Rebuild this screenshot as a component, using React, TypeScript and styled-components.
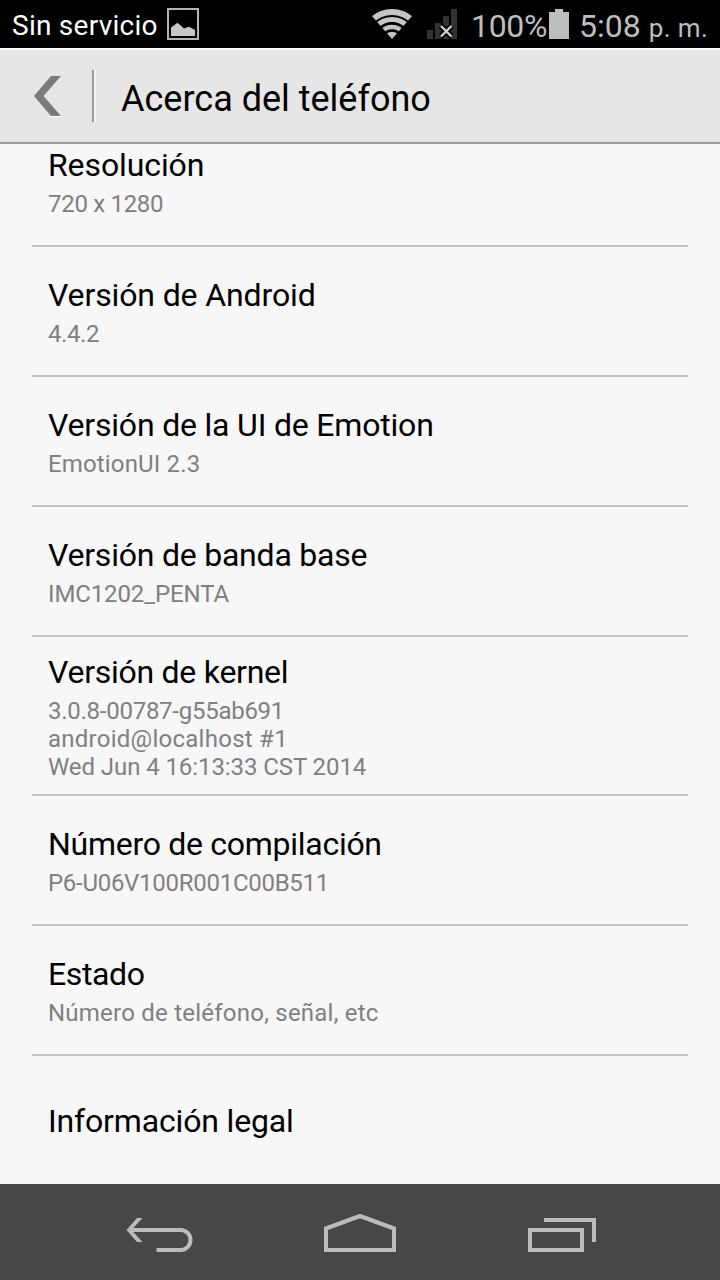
import React from "react";
import styled, { createGlobalStyle } from "styled-components";

const GlobalStyle = createGlobalStyle`
  *, *::before, *::after { box-sizing: border-box; }
  body { margin: 0; background: #f7f7f7; font-family: Roboto, "Noto Sans", sans-serif; }
`;

const Screen = styled.div`
  display: flex;
  flex-direction: column;
  width: 720px;
  height: 1280px;
  overflow: hidden;
  background: #f7f7f7;
`;

const StatusBar = styled.header`
  display: flex;
  align-items: flex-start;
  flex: none;
  height: 48px;
  background: #000;
  padding-left: 12px;
`;

const StatusText = styled.span<{ $size: number; $top: number; $left?: number; $spacing?: number; $color?: string }>`
  flex: none;
  margin-top: ${(p) => p.$top}px;
  margin-left: ${(p) => p.$left ?? 0}px;
  font-size: ${(p) => p.$size}px;
  line-height: 36px;
  letter-spacing: ${(p) => p.$spacing ?? 0}px;
  white-space: pre;
  color: ${(p) => p.$color ?? "#bebebe"};
`;

const Carrier = styled.div`
  display: flex;
  flex: none;
  width: 155px;
`;

const StatusIcon = styled.svg`
  flex: none;
  height: 48px;
`;

const Level = styled.div`
  display: flex;
  flex: none;
  width: 78px;
  margin-left: 11px;
`;

const Spacer = styled.div`
  flex: 1;
`;

const Clock = styled.div`
  display: flex;
  flex: none;
  width: 141px;
  margin-left: 10px;
`;

const TitleBar = styled.div`
  display: flex;
  align-items: center;
  flex: none;
  height: 96px;
  border-top: 2px solid #fff;
  border-bottom: 2px solid #9b9b9b;
  background: #e6e6e6;
`;

const BackIcon = styled.svg`
  flex: none;
  margin-left: 32px;
`;

const Divider = styled.div`
  flex: none;
  width: 4px;
  height: 52px;
  margin-left: 28px;
  border-left: 2px solid #9d9d9d;
  border-right: 2px solid #f4f4f4;
`;

const Heading = styled.h1`
  margin: 5px 0 0 25px;
  font-size: 36px;
  line-height: 42px;
  font-weight: 400;
  color: #000;
`;

const List = styled.main`
  flex: 1;
  min-height: 0;
  padding: 0 32px;
  overflow: hidden;
`;

const Row = styled.section<{ $height: number; $pad: number; $last?: boolean; $scrolled?: boolean }>`
  height: ${(p) => p.$height}px;
  margin-top: ${(p) => (p.$scrolled ? -27 : 0)}px;
  padding: ${(p) => p.$pad}px 16px 0;
  border-bottom: ${(p) => (p.$last ? "none" : "2px solid #c3c3c3")};
`;

const RowTitle = styled.h2<{ $spacing: number }>`
  margin: 0 0 6px;
  font-size: 32px;
  line-height: 38px;
  font-weight: 400;
  letter-spacing: ${(p) => p.$spacing}px;
  white-space: nowrap;
  color: #000;
`;

const RowLine = styled.p<{ $spacing: number }>`
  margin: 0;
  font-size: 24px;
  line-height: 28px;
  letter-spacing: ${(p) => p.$spacing}px;
  white-space: nowrap;
  color: #808080;
`;

const NavBar = styled.nav`
  display: flex;
  align-items: center;
  justify-content: space-around;
  flex: none;
  height: 96px;
  padding: 0 60px;
  background: #474747;
`;

type Item = { title: string; spacing: number; lines: [string, number][]; height?: number; pad?: number };

const items: Item[] = [
  { title: "Resolución", spacing: -0.1, lines: [["720 x 1280", -0.3]] },
  { title: "Versión de Android", spacing: -0.12, lines: [["4.4.2", -0.4]] },
  { title: "Versión de la UI de Emotion", spacing: -0.19, lines: [["EmotionUI 2.3", 0.15]] },
  { title: "Versión de banda base", spacing: -0.22, lines: [["IMC1202_PENTA", -0.12]] },
  {
    title: "Versión de kernel",
    spacing: -0.26,
    lines: [["3.0.8-00787-g55ab691", -0.26], ["android@localhost #1", 0.26], ["Wed Jun 4 16:13:33 CST 2014", -0.08]],
    height: 159,
    pad: 16,
  },
  { title: "Número de compilación", spacing: -0.28, lines: [["P6-U06V100R001C00B511", -0.28]] },
  { title: "Estado", spacing: -0.4, lines: [["Número de teléfono, señal, etc", 0.23]] },
  { title: "Información legal", spacing: -0.16, lines: [], pad: 46 },
];

export default function App() {
  return (
    <Screen>
      <GlobalStyle />
      <StatusBar>
        <Carrier>
          <StatusText $size={28} $top={8} $spacing={0.25} $color="#fff">Sin servicio</StatusText>
        </Carrier>
        <StatusIcon width="33" viewBox="167 0 33 48">
          <rect x="168" y="9" width="30" height="30" fill="none" stroke="#b4b4b4" strokeWidth="2" />
          <path d="M171 36V27.500L177.500 22.700L184 28.500L189 26.700L195 30V36Z" fill="#c8c8c8" />
        </StatusIcon>
        <Spacer />
        <StatusIcon width="90" viewBox="370 0 90 48">
          <defs>
            <clipPath id="wifi-wedge">
              <path d="M392 39L371 14.900V0H413V14.900Z" />
            </clipPath>
          </defs>
          <g clipPath="url(#wifi-wedge)" fill="none" stroke="#c4c4c4">
            <circle cx="392" cy="41" r="29" strokeWidth="6" />
            <circle cx="392" cy="41" r="21.600" strokeWidth="5" />
            <circle cx="392" cy="41" r="14" strokeWidth="4.600" />
            <circle cx="392" cy="41" r="9.300" fill="#c4c4c4" stroke="none" />
          </g>
          <path d="M427 30h6v9h-6zM435 23h6v16h-6zM443 16h6v23h-6zM451 9h6v30h-6z" fill="#333" />
          <path d="M441 26L451.500 36.500M451.500 26L441 36.500" stroke="#000" strokeWidth="6" />
          <path d="M441 26L451.500 36.500M451.500 26L441 36.500" stroke="#d0d0d0" strokeWidth="2.400" />
        </StatusIcon>
        <Level>
          <StatusText $size={32} $top={8} $spacing={-0.3}>100%</StatusText>
        </Level>
        <StatusIcon width="20" viewBox="549 0 20 48">
          <path d="M549 12h6V9h8v3h6v27h-20z" fill="#bebebe" />
        </StatusIcon>
        <Clock>
          <StatusText $size={32} $top={8}>5:08</StatusText>
          <StatusText $size={26} $top={10} $left={8} $spacing={0.4}>p. m.</StatusText>
        </Clock>
      </StatusBar>
      <TitleBar>
        <BackIcon width="32" height="46" viewBox="32 73 32 46">
          <path d="M51 116.500H61" fill="none" stroke="#fff" strokeWidth="1" />
          <path d="M51 76H61L43.500 96L61 116H51L34 96Z" fill="#7b7b7b" />
        </BackIcon>
        <Divider />
        <Heading>Acerca del teléfono</Heading>
      </TitleBar>
      <List>
        {items.map((item, i) => (
          <Row
            key={item.title}
            $height={item.height ?? 130}
            $pad={item.pad ?? 29}
            $scrolled={i === 0}
            $last={i === items.length - 1}
          >
            <RowTitle $spacing={item.spacing}>{item.title}</RowTitle>
            {item.lines.map(([text, spacing]) => (
              <RowLine key={text} $spacing={spacing}>{text}</RowLine>
            ))}
          </Row>
        ))}
      </List>
      <NavBar>
        <svg width="80" height="48" viewBox="120 1208 80 48">
          <path d="M129 1230H180.500A10 10 0 0 1 180.500 1250H156.500" fill="none" stroke="#bcbcbc" strokeWidth="4" />
          <path d="M137 1218H142.500L131.500 1230L142.500 1242H137L126.500 1230Z" fill="#bcbcbc" />
        </svg>
        <svg width="80" height="48" viewBox="320 1208 80 48">
          <path d="M326 1228.500L360 1216L394 1228.500V1250H326Z" fill="none" stroke="#bcbcbc" strokeWidth="4" />
        </svg>
        <svg width="80" height="48" viewBox="520 1208 80 48">
          <path d="M530 1230H582V1250H530ZM544 1220H594V1242" fill="none" stroke="#bcbcbc" strokeWidth="4" />
        </svg>
      </NavBar>
    </Screen>
  );
}
